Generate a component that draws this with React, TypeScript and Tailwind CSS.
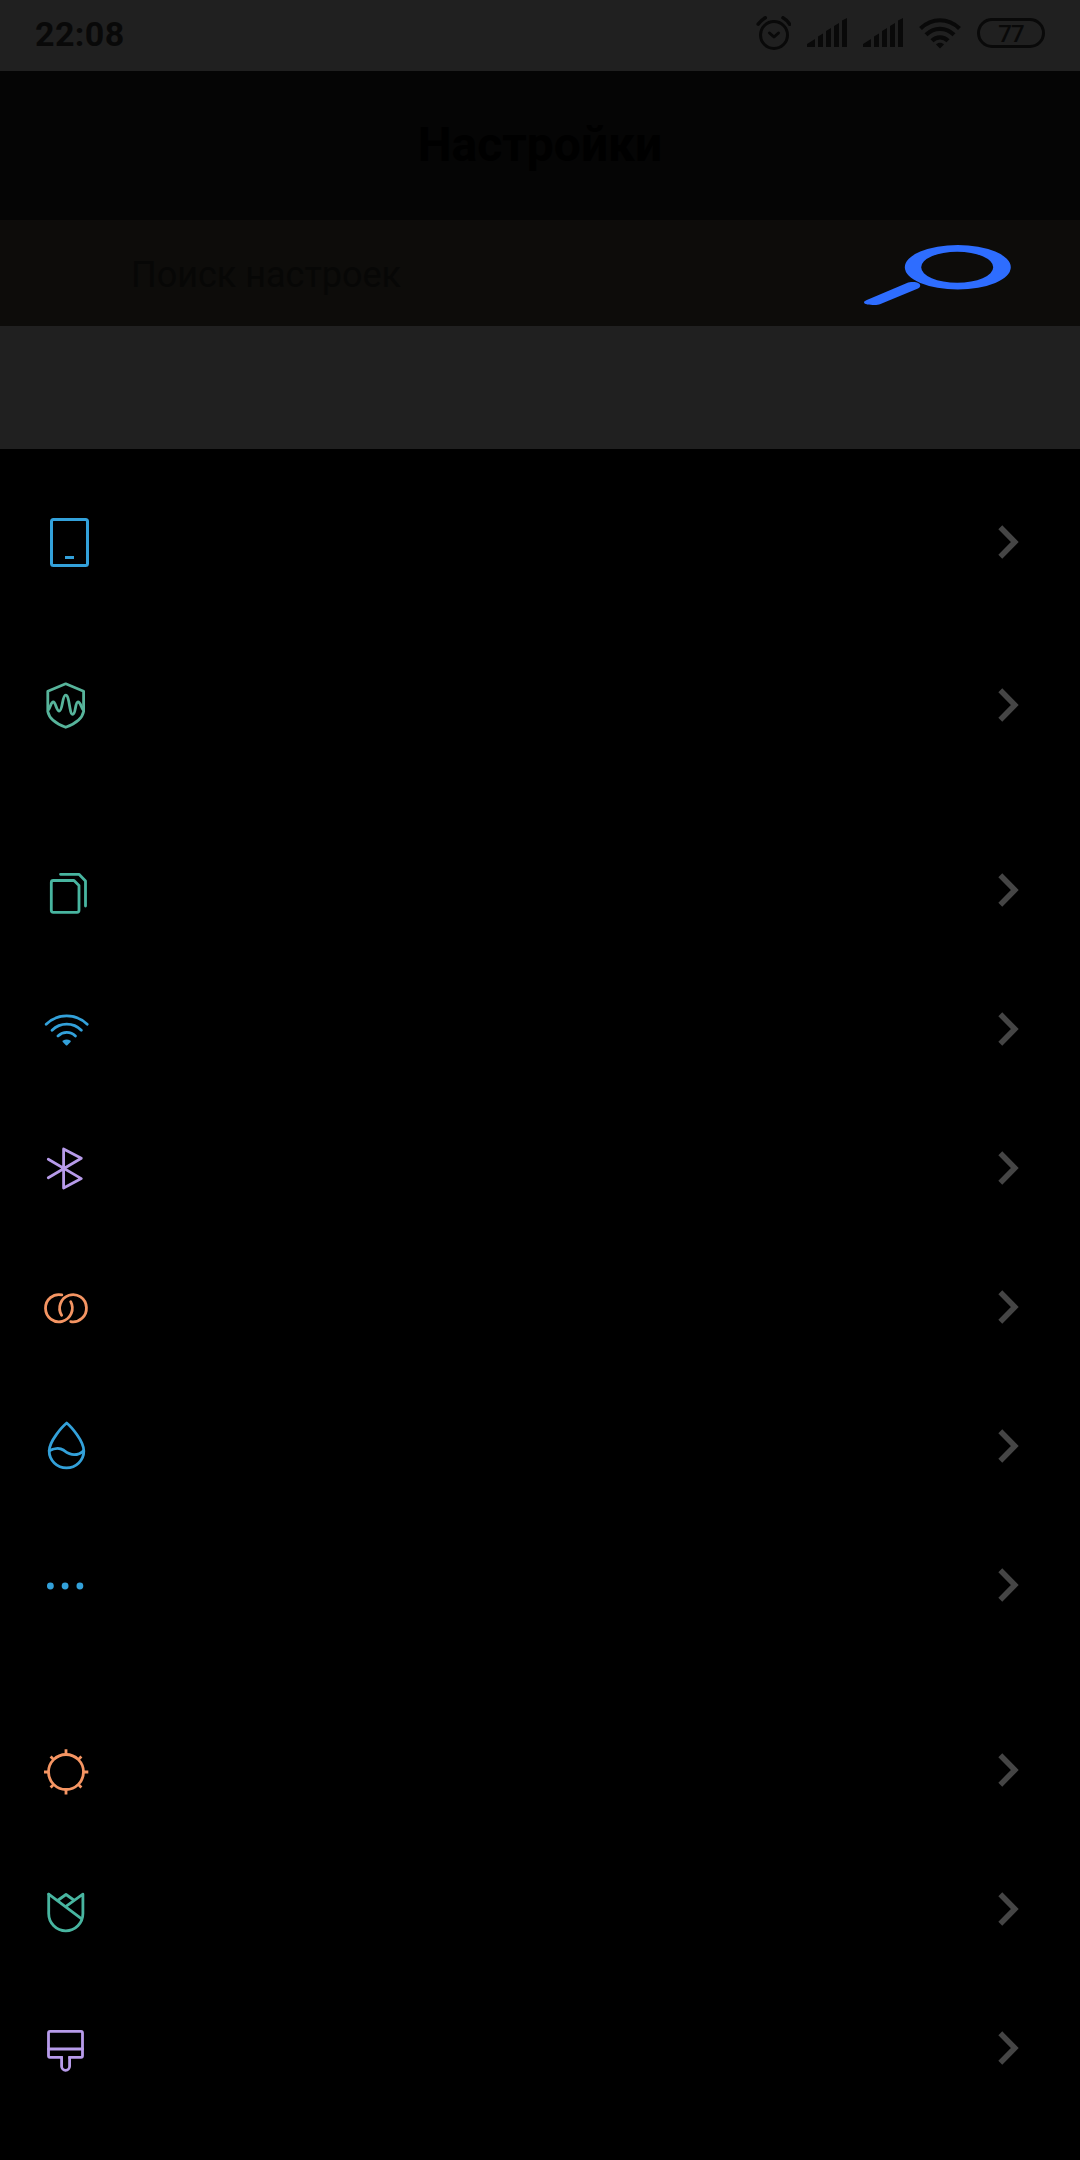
import React from 'react';

interface SettingsItem {
  id: string;
  color: string;
  icon: React.ReactNode;
}

interface SettingsGroup {
  id: string;
  spacing: string;
  rowHeight: string;
  items: SettingsItem[];
}

const BLUE = 'text-[#33a1da]';
const GREEN = 'text-[#48b5a0]';
const PURPLE = 'text-[#b79bea]';
const ORANGE = 'text-[#f59563]';

const groups: SettingsGroup[] = [
  {
    id: 'device',
    spacing: 'pt-3',
    rowHeight: 'h-[163px]',
    items: [
      {
        id: 'about',
        color: BLUE,
        icon: (
          <>
            <rect x="11.5" y="8.5" width="36" height="46" rx="2" strokeWidth="3" />
            <path d="M25 46.5h9" strokeWidth="3" strokeLinecap="butt" />
          </>
        )
      },
      {
        id: 'security',
        color: 'text-[#57b49b]',
        icon: (
          <>
            <path d="M25.7 9.8 43.6 17.2v20.3C42.5 43.5 36 49.5 25.7 53.3 15.4 49.5 8.9 43.5 7.8 37.5V17.2z" />
            <path d="M8.7 35.5C10.5 33 11 28 13.3 28c2.5 0 3 9 6 9 3.4 0 2.8-15.800 6.4-15.800 4 0 3.5 19.200 7 19.200 3.2 0 2.300-12.400 5.300-12.400 2.300 0 3 4.500 4.900 7.500" />
          </>
        )
      },
    ]
  },
  {
    id: 'network',
    spacing: 'pt-[34px]',
    rowHeight: 'h-[139px]',
    items: [
      {
        id: 'sim',
        color: GREEN,
        icon: (
          <>
            <path d="M13.3 21.5H34l5 5v24.8a2 2 0 0 1-2 2H13.3a2 2 0 0 1-2-2V23.5a2 2 0 0 1 2-2z" />
            <path d="M20.5 15.3H39l6.5 6.7v25" />
          </>
        )
      },
      {
        id: 'wifi',
        color: BLUE,
        icon: (
          <>
            <path d="M6.2 26.300C17.700 15.200 35.600 15.200 47.200 26.300M12.100 32.200c8.200-8 21.200-8 29.200 0M18 37.900c5-4.700 12.600-4.700 17.400 0" />
            <path d="M23.500 43.300c1.800-1 4.500-1 6.300 0l-3.200 3.200z" fill="currentColor" strokeWidth="2" />
          </>
        )
      },
      {
        id: 'bluetooth',
        color: PURPLE,
        icon: <path d="m8.300 22.300 33 19.300-17.700 9.400V12l17.700 9.300-33 19.400" />
      },
      {
        id: 'vpn',
        color: ORANGE,
        icon: (
          <>
            <path d="M21.8 18.900A13.400 13.600 0 1 0 30.700 25.700" />
            <path d="M30.700 45.600A13.400 13.600 0 1 0 21.600 39.300" />
          </>
        )
      },
      {
        id: 'data',
        color: BLUE,
        icon: (
          <>
            <path d="M26.700 8C31 11.500 43.800 26 43.800 36a17.300 16.800 0 0 1-34.600 0C9.200 26 22.400 11.500 26.700 8z" />
            <path d="M9.300 35.800c4-2.300 10-3.500 14-.8 3.700 2.700 6 4.700 10.800 4.700 4 0 7-1.500 9.500-4" />
          </>
        )
      },
      {
        id: 'more',
        color: BLUE,
        icon: (
          <g fill="currentColor" stroke="none">
            <circle cx="10.4" cy="32" r="3.4" />
            <circle cx="25.1" cy="32" r="3.4" />
            <circle cx="39.9" cy="32" r="3.4" />
          </g>
        )
      }
    ]
  },
  {
    id: 'personal',
    spacing: 'pt-[46px]',
    rowHeight: 'h-[139px]',
    items: [
      {
        id: 'display',
        color: ORANGE,
        icon: (
          <>
            <circle cx="26" cy="33" r="17.5" />
            <path
              d="M26 10.300v5.200M26 50.500v5M4 33h5M42.800 33h5.500M10.600 17.600l3.500 3.500M41.400 17.600l-3.500 3.500M10.600 48.400l3.500-3.500M41.400 48.400l-3.500-3.500"
              strokeLinecap="butt"
            />
          </>
        )
      },
      {
        id: 'wallpaper',
        color: GREEN,
        icon: (
          <>
            <path d="M8.700 16.200V35.500a17.100 17.300 0 0 0 34.200 0V16.200L26 28.300" />
            <path d="m8.700 16.200 32.600 24.500M18.300 22 26 16.500l7.700 5.500" />
          </>
        )
      },
      {
        id: 'themes',
        color: PURPLE,
        icon: (
          <>
            <path d="M22.800 40.300H10a1.500 1.500 0 0 1-1.500-1.500V15.900a1.500 1.500 0 0 1 1.500-1.500h31a1.500 1.500 0 0 1 1.500 1.500v22.900a1.500 1.500 0 0 1-1.500 1.500H28.400" strokeLinecap="butt" />
            <path d="M8.500 32h34" />
            <path d="M21.600 40.300v9a4 4 0 0 0 8 0v-9" />
          </>
        )
      }
    ]
  }
];

const SignalIcon = () => (
  <svg className="h-[30px] w-[40px]" viewBox="0 0 40 30" fill="currentColor">
    <path d="M0 29v-3l8-5v8zM11 29V18.5l5-3V29zM19 29V13l5-3V29zM27 29V8l5-3V29zM35 29V2.500L40 0v29z" />
  </svg>
);

const StatusBar = () => (
  <div className="flex h-[71px] items-start bg-[#202020] text-[#090909]">
    <span className="mt-[14px] ml-[35px] text-[34px] leading-[40px] font-bold tracking-[0.4px]">22:08</span>
    <div className="mt-4 mr-[35px] ml-auto flex items-start">
      <svg className="mr-4 h-[34px] w-[35px]" viewBox="0 0 35 34" fill="none" stroke="currentColor" strokeWidth="3" strokeLinecap="round">
        <circle cx="18" cy="19" r="13.5" />
        <path d="m13.500 17 4.500 4 4.500-4" strokeLinejoin="round" />
        <path d="M2.200 8.200Q5.500 4 9.300 1.800M27 1.800Q31 4 33.700 8.200" strokeWidth="3.500" />
      </svg>
      <div className="mt-[2px] mr-4 flex gap-4">
        <SignalIcon />
        <SignalIcon />
      </div>
      <svg className="mt-[2px] mr-4 h-[31px] w-[42px]" viewBox="0 0 42 31" fill="none" stroke="currentColor" strokeWidth="4.200">
        <path d="M1.500 10.500C13-.5 29-.5 40.500 10.500M7 16.800c8-8 20-8 28 0M13 22.800c4.500-4.500 11.500-4.500 16 0" />
        <path d="M17 26.500c2-2.300 6-2.300 8 0L21 30.500z" fill="currentColor" stroke="none" />
      </svg>
      <div className="mt-[2px] flex h-[30px] w-[68px] items-center justify-center rounded-full border-[3px] border-current pt-px text-[24px] leading-none font-medium tracking-[-1px]">
        77
      </div>
    </div>
  </div>
);

const SearchBar = () => (
  <div className="flex h-[106px] items-center justify-between bg-[#0d0c0a] pr-[68px] pl-[131px]">
    <span className="pt-1 text-[36px] leading-[42px] text-[#070706]">Поиск настроек</span>
    <svg className="h-[64px] w-[149px] shrink-0" viewBox="0 0 149 64" fill="#2e6dff">
      <path
        fillRule="evenodd"
        d="M41.800 26.300a53 22.200 0 1 1 106 0 53 22.200 0 1 1-106 0zM58.200 26.300a36 15.500 0 1 0 72 0 36 15.500 0 1 0-72 0z"
      />
      <path d="M1 61.500c0-1.300 1.500-2 4-3L44 42c3-1.300 9-1.500 12 .5 2 1.500 1.500 4-1 5L17.500 63c-2 .7-3.500 1-6 1C6.500 64 1 63.300 1 61.500z" />
    </svg>
  </div>
);

const Chevron = () => (
  <svg className="ml-auto h-[35px] w-[24px] text-[#454545]" viewBox="0 0 24 35" fill="none" stroke="currentColor" strokeWidth="5.5">
    <path d="M2.300 2.300 16.800 17 2.300 31.700" />
  </svg>
);

const App: React.FC = () => {
  return (
    <div className="flex h-[2160px] w-[1080px] flex-col overflow-hidden bg-black font-['Roboto','Noto_Sans',sans-serif]">
      <StatusBar />

      <header className="flex h-[149px] items-center justify-center bg-[#050505] pb-0.5">
        <h1 className="text-[48px] leading-[56px] font-bold text-black">Настройки</h1>
      </header>
      <SearchBar />
      <div className="h-[123px] bg-[#202020]" />

      {/* Settings list */}
      <main className="flex flex-col">
        {groups.map((group) => (
          <section key={group.id} className={group.spacing}>
            {group.items.map((item) => (
              <div key={item.id} className={`flex items-center pr-[58px] pl-10 ${group.rowHeight}`}>
                <svg
                  className={`h-[63px] w-[52px] ${item.color}`}
                  viewBox="0 0 52 63"
                  fill="none"
                  stroke="currentColor"
                  strokeWidth="2.8"
                  strokeLinecap="round"
                  strokeLinejoin="round"
                >
                  {item.icon}
                </svg>
                <Chevron />
              </div>
            ))}
          </section>
        ))}
      </main>
    </div>
  );
};

export default App;
